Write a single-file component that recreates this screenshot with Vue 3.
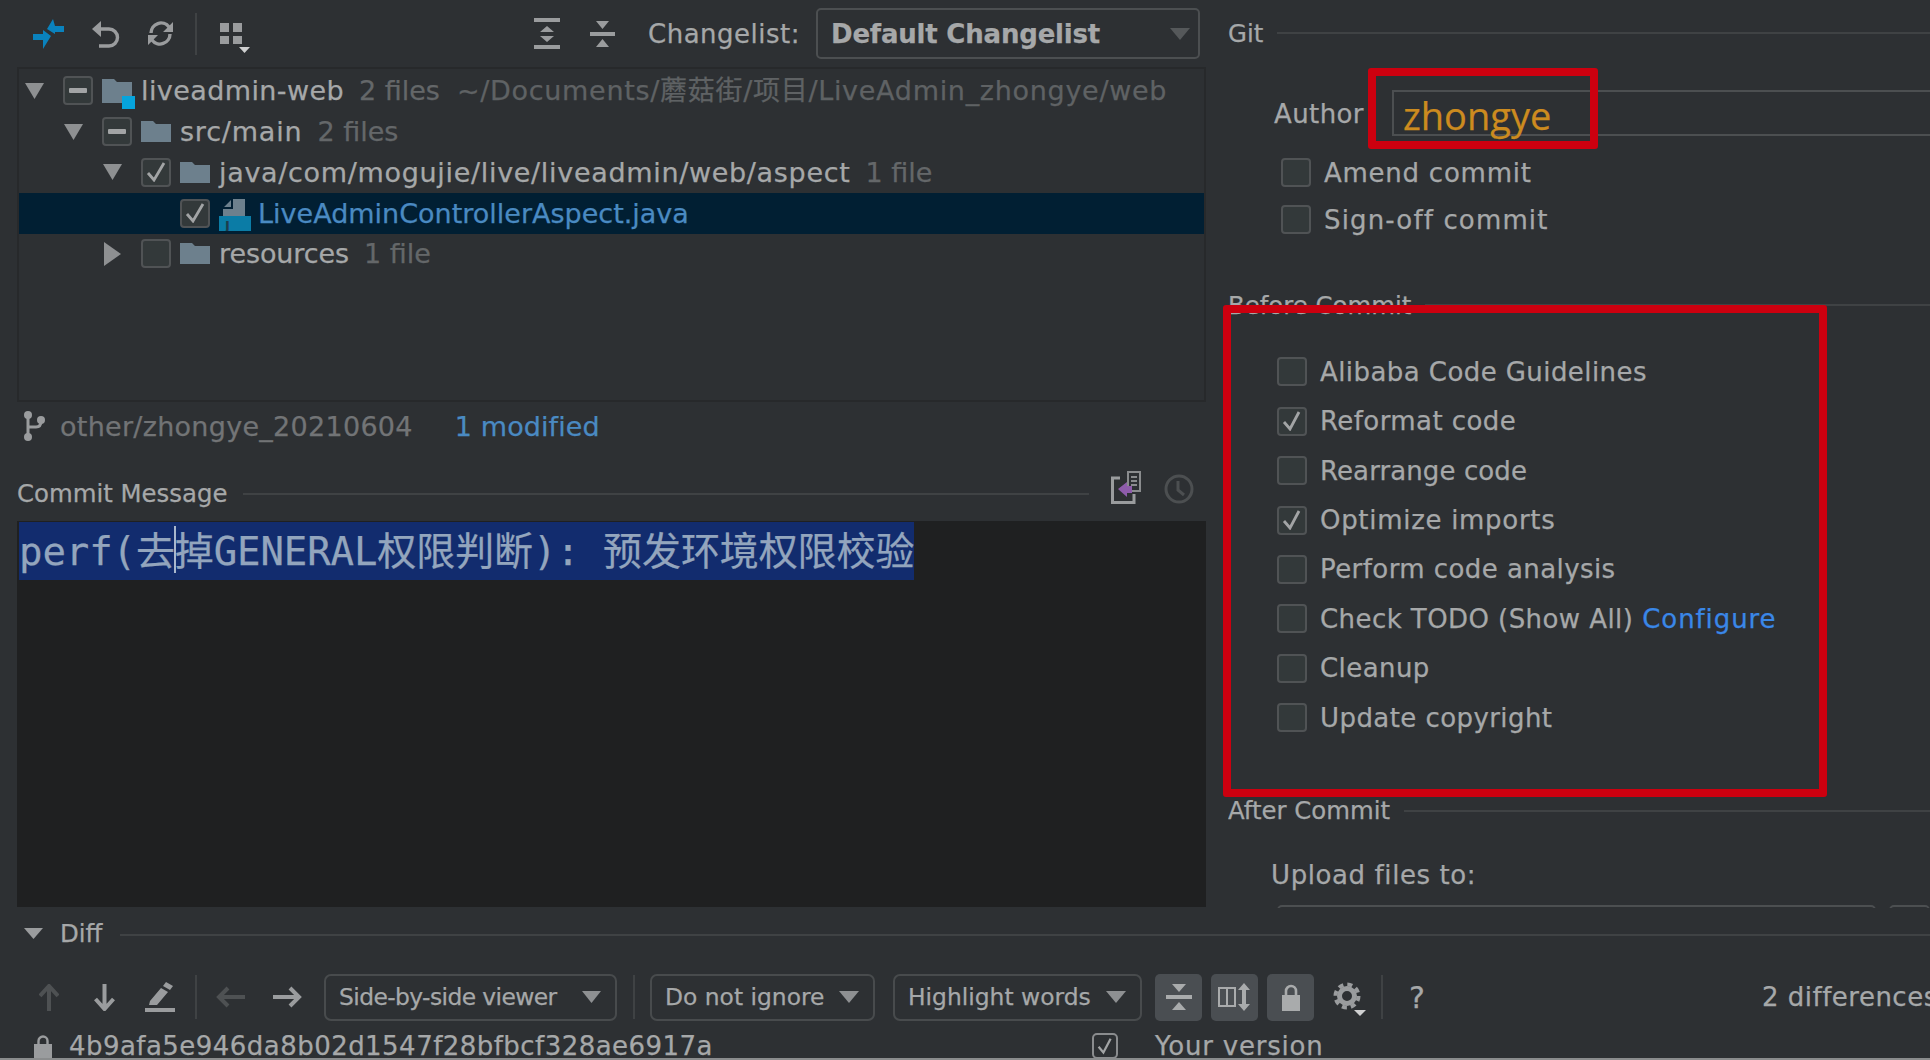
<script setup>
const rows = [
  { level: 0, arrow: 'down', box: 'mixed', icon: 'module', name: 'liveadmin-web', hint: '2 files', path: '~/Documents/蘑菇街/项目/LiveAdmin_zhongye/web', ls: 0.4 },
  { level: 1, arrow: 'down', box: 'mixed', icon: 'folder', name: 'src/main', hint: '2 files', ls: 0.8 },
  { level: 2, arrow: 'down', box: 'checked', icon: 'folder', name: 'java/com/mogujie/live/liveadmin/web/aspect', hint: '1 file', ls: 0.68 },
  { level: 3, arrow: '', box: 'checked', icon: 'java', name: 'LiveAdminControllerAspect.java', hint: '', selected: true, ls: 0 },
  { level: 2, arrow: 'right', box: 'empty', icon: 'folder', name: 'resources', hint: '1 file', ls: -0.1 },
]
const before = [
  { label: 'Alibaba Code Guidelines', on: false },
  { label: 'Reformat code', on: true },
  { label: 'Rearrange code', on: false, ls: 0.1 },
  { label: 'Optimize imports', on: true, ls: 0.7 },
  { label: 'Perform code analysis', on: false },
  { label: 'Check TODO (Show All)', on: false, link: 'Configure' },
  { label: 'Cleanup', on: false },
  { label: 'Update copyright', on: false },
]
</script>

<template>
  <div class="app">
    <div class="top">
      <div class="left">
        <div class="toolbar">
          <svg class="i-merge" width="31" height="30" viewBox="0 0 31 30"><path fill="#0a82bd" d="M20 0 L14 10 L22 15 V13 H31 V7 H22 Z M0 15 H10 V11 L18 17 L10 30 V21 H0 Z"/></svg>
          <svg class="i-undo" width="28" height="28" viewBox="0 0 28 28"><path d="M6 9 H17 a8.5 8.5 0 0 1 0 17 H7" fill="none" stroke="#9a9c9e" stroke-width="3.4"/><path d="M0 9 L9 1 V17 Z" fill="#9a9c9e"/></svg>
          <svg class="i-refresh" width="27" height="27" viewBox="0 0 27 27"><path d="M4 13 a10 10 0 0 1 18 -6 M23 14 a10 10 0 0 1 -18 6" fill="none" stroke="#9a9c9e" stroke-width="3.4"/><path d="M26 2 V12 H16 Z M1 25 V15 H11 Z" fill="#9a9c9e"/></svg>
          <span class="vsep top-sep"></span>
          <svg class="i-group" width="30" height="30" viewBox="0 0 30 30"><path fill="#9a9c9e" d="M0 0 H9 V9 H0 Z M13 0 H22 V9 H13 Z M0 13 H9 V21 H0 Z M13 13 H22 V21 H13 Z"/><path fill="#cfd0d1" d="M19 24 H30 L24.5 30 Z"/></svg>
          <svg class="i-expand" width="26" height="31" viewBox="0 0 26 31"><path fill="#9a9c9e" d="M0 0 H26 V4 H0 Z M13 8 L20 14 H6 Z M6 18 H20 L13 24 Z M0 27 H26 V31 H0 Z"/></svg>
          <svg class="i-collapse" width="25" height="26" viewBox="0 0 25 26"><path fill="#9a9c9e" d="M6 0 H19 L12.5 8 Z M0 11 H25 V15 H0 Z M12.5 18 L19 26 H6 Z"/></svg>
          <span class="cl-label">Changelist:</span>
          <div class="cl-combo">
            <span class="cl-value">Default Changelist</span>
            <svg width="20" height="12" viewBox="0 0 20 12"><path fill="#55585a" d="M0 0 H20 L10 12 Z"/></svg>
          </div>
        </div>

        <div class="tree">
          <div v-for="row in rows" :key="row.name" class="row" :class="{ selected: row.selected }">
            <div class="row-in" :style="{ paddingLeft: row.level * 39 + 'px' }">
              <span class="arrow">
                <svg v-if="row.arrow === 'down'" width="19" height="16" viewBox="0 0 19 16"><path fill="#8e9092" d="M0 0 H19 L9.5 16 Z"/></svg>
                <svg v-else-if="row.arrow === 'right'" width="17" height="24" viewBox="0 0 17 24"><path fill="#8e9092" d="M0 0 L17 12 L0 24 Z"/></svg>
              </span>
              <span class="cb tree-cb">
                <svg v-if="row.box === 'checked'" width="20" height="20" viewBox="0 0 20 20"><path d="M2 11 L8 18 L18 1" fill="none" stroke="#a2a4a5" stroke-width="2.8"/></svg>
                <i v-else-if="row.box === 'mixed'" class="dash"></i>
              </span>
              <span class="ico">
                <svg v-if="row.icon === 'folder'" width="30" height="21" viewBox="0 0 30 21"><path fill="#6d808d" d="M0 0 H12 L15 3 H30 V21 H0 Z"/></svg>
                <svg v-else-if="row.icon === 'module'" class="module" width="33" height="30" viewBox="0 0 33 30"><path fill="#6d808d" d="M0 0 H12 L15 3 H30 V21 H20 V24 H0 Z"/><rect x="20" y="17" width="13" height="13" fill="#06a4dc"/></svg>
                <svg v-else class="java" width="33" height="32" viewBox="0 0 33 32"><path fill="#6d808d" d="M14 0 H26 V17 H4 V10 H14 Z M5 8 L12 1 V8 Z"/><rect x="0" y="17" width="32" height="15" fill="#0b7ca6"/><text x="6" y="31" class="jtext">J</text></svg>
              </span>
              <span class="row-text">
                <span class="name" :style="{ letterSpacing: row.ls + 'px' }">{{ row.name }}</span>
                <span v-if="row.hint" class="hint">{{ row.hint }}</span>
                <span v-if="row.path" class="path">{{ row.path }}</span>
              </span>
            </div>
          </div>
        </div>

        <div class="status">
          <svg width="23" height="30" viewBox="0 0 23 30"><g fill="none" stroke="#9a9c9e" stroke-width="3"><path d="M6 4 V26 M6 16 H14 Q19 16 19 10"/></g><g fill="#9a9c9e"><circle cx="6" cy="4" r="4"/><circle cx="6" cy="26" r="4"/><circle cx="19" cy="9" r="4"/></g></svg>
          <span class="branch">other/zhongye_20210604</span>
          <span class="modified">1 modified</span>
        </div>

        <div class="msg-head">
          <span class="label msg-label">Commit Message</span>
          <span class="line msg-line"></span>
          <svg class="i-doc" width="30" height="33" viewBox="0 0 30 33"><path d="M9 7 H1.5 V31.5 H23 V23" fill="none" stroke="#9a9c9e" stroke-width="3"/><path d="M17 1 H29 V20 H17 Z" fill="none" stroke="#8a8c8e" stroke-width="2"/><path d="M20 6 H26 M20 10 H26 M20 14 H26" stroke="#8a8c8e" stroke-width="2"/><path d="M7 18 L16 11 V15 H21 V22 H16 V26 Z" fill="#8e5cab"/></svg>
          <svg class="i-clock" width="30" height="30" viewBox="0 0 30 30"><circle cx="15" cy="15" r="13" fill="none" stroke="#4c4f51" stroke-width="3"/><path d="M14 7 V16 L20 21" fill="none" stroke="#4c4f51" stroke-width="3"/></svg>
        </div>

        <div class="editor">
          <div class="sel">perf(去<span class="caret"></span>掉GENERAL权限判断): 预发环境权限校验</div>
        </div>
      </div>

      <div class="right">
        <div class="sec"><span class="label">Git</span><span class="line"></span></div>
        <div class="author">
          <span class="author-label">Author</span>
          <div class="author-input">zhongye</div>
        </div>
        <div class="git-opts">
          <div class="opt"><span class="cb"></span><span>Amend commit</span></div>
          <div class="opt"><span class="cb"></span><span class="signoff">Sign-off commit</span></div>
        </div>
        <div class="sec before-sec"><span class="label">Before Commit</span><span class="line"></span></div>
        <div class="before">
          <div v-for="b in before" :key="b.label" class="before-row">
            <span class="cb">
              <svg v-if="b.on" width="20" height="20" viewBox="0 0 20 20"><path d="M2 11 L8 18 L17 1" fill="none" stroke="#a2a4a5" stroke-width="2.8"/></svg>
            </span>
            <span :style="b.ls ? { letterSpacing: b.ls + 'px' } : null">{{ b.label }}</span>
            <span v-if="b.link" class="link">{{ b.link }}</span>
          </div>
        </div>
        <div class="sec after-sec"><span class="label">After Commit</span><span class="line"></span></div>
        <div class="upload">Upload files to:</div>
        <div class="upload-row"><span class="upload-field"></span><span class="upload-btn"></span></div>
      </div>
    </div>

    <div class="diff-head">
      <svg class="diff-arrow" width="19" height="11" viewBox="0 0 19 11"><path fill="#9a9c9e" d="M0 0 H19 L9.5 11 Z"/></svg>
      <span class="label diff-label">Diff</span>
      <span class="line"></span>
    </div>

    <div class="diff-bar">
      <svg class="d-up" width="20" height="27" viewBox="0 0 20 27"><path d="M10 27 V3 M1 12 L10 2 L19 12" fill="none" stroke="#4e5153" stroke-width="4"/></svg>
      <svg class="d-down" width="21" height="27" viewBox="0 0 21 27"><path d="M10.5 0 V24 M1.5 15 L10.5 25 L19.5 15" fill="none" stroke="#9a9c9e" stroke-width="4"/></svg>
      <svg class="d-edit" width="30" height="30" viewBox="0 0 30 30"><path fill="#9a9c9e" d="M21 0 L28 4 L25 8 L18 4 Z M16 6 L23 10 L12 23 L4 23 L5 19 Z M0 26 H30 V30 H0 Z"/></svg>
      <span class="vsep d-sep"></span>
      <svg class="d-left" width="29" height="22" viewBox="0 0 29 22"><path d="M29 11 H3 M12 2 L3 11 L12 20" fill="none" stroke="#4e5153" stroke-width="4"/></svg>
      <svg class="d-right" width="29" height="22" viewBox="0 0 29 22"><path d="M0 11 H26 M17 2 L26 11 L17 20" fill="none" stroke="#9a9c9e" stroke-width="4"/></svg>
      <div class="combo c1"><span>Side-by-side viewer</span><svg width="19" height="12" viewBox="0 0 19 12"><path fill="#8e9092" d="M0 0 H19 L9.5 12 Z"/></svg></div>
      <span class="vsep c-sep"></span>
      <div class="combo c2"><span>Do not ignore</span><svg width="20" height="12" viewBox="0 0 20 12"><path fill="#8e9092" d="M0 0 H20 L10 12 Z"/></svg></div>
      <div class="combo c3"><span>Highlight words</span><svg width="20" height="12" viewBox="0 0 20 12"><path fill="#8e9092" d="M0 0 H20 L10 12 Z"/></svg></div>
      <div class="tgl t1"><svg width="26" height="26" viewBox="0 0 26 26"><path fill="#a9abac" d="M6 0 H20 L13 8 Z M0 11 H26 V15 H0 Z M13 18 L20 26 H6 Z"/></svg></div>
      <div class="tgl"><svg width="34" height="28" viewBox="0 0 34 28"><path d="M1 5 H17 V23 H1 Z M9 5 V23" fill="none" stroke="#a9abac" stroke-width="2"/><path fill="#a9abac" d="M26 0 L32 7 H28 V21 H32 L26 28 L20 21 H24 V7 H20 Z"/></svg></div>
      <div class="tgl"><svg width="20" height="27" viewBox="0 0 20 27"><path d="M5 11 V7 a5 5 0 0 1 10 0 V11" fill="none" stroke="#a9abac" stroke-width="2.6"/><rect x="1" y="11" width="18" height="16" fill="#a9abac"/></svg></div>
      <svg class="d-gear" width="33" height="34" viewBox="0 0 33 34"><circle cx="14" cy="14" r="7.5" fill="none" stroke="#9a9c9e" stroke-width="5"/><circle cx="14" cy="14" r="11.5" fill="none" stroke="#9a9c9e" stroke-width="4" stroke-dasharray="5 4.03"/><path fill="#cfd0d1" d="M21 28 H33 L27 34 Z"/></svg>
      <span class="vsep g-sep"></span>
      <span class="help">?</span>
      <span class="diffs">2 differences</span>
    </div>

    <div class="foot">
      <svg width="18" height="23" viewBox="0 0 18 23"><path d="M4.5 10 V6 a4.5 4.5 0 0 1 9 0 V10" fill="none" stroke="#9a9c9e" stroke-width="2.4"/><rect x="0" y="9" width="18" height="14" fill="#9a9c9e"/></svg>
      <span class="hash">4b9afa5e946da8b02d1547f28bfbcf328ae6917a</span>
      <span class="foot-cb"><svg width="16" height="18" viewBox="0 0 20 20"><path d="M2 11 L8 18 L17 1" fill="none" stroke="#a2a4a5" stroke-width="2.8"/></svg></span>
      <span class="version">Your version</span>
    </div>

    <div class="mark mark-author"></div>
    <div class="mark mark-before"></div>
  </div>
</template>

<style>
html, body { margin: 0; background: #2d3033; }
</style>

<style scoped>
.app {
  position: relative;
  width: 1930px;
  height: 1060px;
  overflow: hidden;
  display: flex;
  flex-direction: column;
  box-sizing: border-box;
  border-bottom: 2px solid #8a8c8d;
  background: #2d3033;
  color: #a6a8a9;
  font-family: "DejaVu Sans", "Noto Sans CJK SC", sans-serif;
  font-size: 26px;
  white-space: nowrap;
  -webkit-text-stroke: 0.25px currentColor;
}
svg { display: block; flex: none; }
.top { display: flex; height: 908px; flex: none; }
.left { width: 1228px; flex: none; display: flex; flex-direction: column; box-sizing: border-box; padding: 0 22px 1px 17px; }
.toolbar { height: 67px; flex: none; display: flex; align-items: center; position: relative; }
.i-merge { margin-left: 16px; }
.i-undo { margin-left: 28px; }
.i-refresh { margin-left: 27px; }
.vsep { width: 2px; background: #3f4244; flex: none; }
.top-sep { height: 42px; margin-left: 21px; }
.i-group { margin-left: 23px; margin-top: 8px; }
.i-expand { margin-left: 284px; }
.i-collapse { margin-left: 30px; }
.cl-label { margin-left: 33px; width: 168px; letter-spacing: 0.5px; }
.cl-combo {
  width: 384px; height: 51px; box-sizing: border-box; flex: none;
  border: 2px solid #4c4f51; border-radius: 5px;
  display: flex; align-items: center; justify-content: space-between;
  padding: 0 8px 0 13px; font-weight: 700; letter-spacing: -0.2px;
}
.tree { height: 335px; flex: none; box-sizing: border-box; border: 2px solid #27292b; padding-top: 1.5px; }
.row { height: 40.75px; display: flex; align-items: center; }
.row.selected { background: #011f33; }
.row-in { display: flex; align-items: center; margin-left: 6px; }
.arrow { width: 19px; flex: none; display: flex; justify-content: center; }
.cb {
  width: 30px; height: 29px; box-sizing: border-box; flex: none;
  border: 2px solid #505355; border-radius: 4px; background: #33393a;
  display: flex; align-items: center; justify-content: center;
}
.tree-cb { margin-left: 19px; }
.dash { display: block; width: 18px; height: 5px; background: #a2a4a5; border-radius: 1px; }
.ico { width: 39px; margin-left: 9px; flex: none; display: flex; align-items: center; height: 30px; }
.module { margin-top: 6px; }
.java { margin-top: 4px; }
.jtext { font: 700 13px "DejaVu Sans", sans-serif; fill: #1d3d4e; -webkit-text-stroke: 0; }
.row-text { font-size: 27px; margin-top: 1px; line-height: 34px; }
.selected .name { color: #4a8ac2; }
.hint { margin-left: 15px; color: #646769; }
.path { margin-left: 17px; color: #5f6264; letter-spacing: 0.7px; }
.status { height: 46px; flex: none; display: flex; align-items: center; padding-left: 5px; margin-top: 1px; font-size: 27px; }
.branch { margin-left: 15px; color: #727476; letter-spacing: 0.28px; }
.modified { margin-left: 42px; color: #4a8ac2; letter-spacing: 0.1px; }
.msg-head { height: 72px; flex: none; display: flex; align-items: center; position: relative; }
.label { flex: none; font-size: 24.4px; }
.msg-label { margin-top: 16px; }
.line { flex: 1; height: 2px; background: #3f4244; }
.msg-line { margin-left: 16px; margin-top: 18px; }
.i-doc { margin-left: 22px; margin-top: 5px; }
.i-clock { margin-left: 23px; margin-right: 12px; margin-top: 8px; }
.editor { flex: 1; background: #1f2021; padding: 1px 0 0 2px; min-height: 0; }
.sel {
  display: inline-block; height: 58px; line-height: 60px;
  background: #122c6e; color: #93a5bd;
  font-family: "DejaVu Sans Mono", "Noto Sans CJK SC", monospace; font-size: 39px;
  letter-spacing: -0.1px;
}
.caret { position: relative; display: inline-block; width: 0; height: 0; }
.caret::after { content: ""; position: absolute; left: -1px; top: -39px; width: 2px; height: 47px; background: #a9b7cc; }
.right { flex: 1; min-width: 0; overflow: hidden; height: 908px; }
.sec { height: 40px; display: flex; align-items: center; }
.sec:first-child { margin-top: 13px; }
.sec .line { margin-left: 14px; }
.author { display: flex; align-items: center; margin-top: 37px; height: 46px; padding-left: 46px; }
.author-label { width: 118px; flex: none; letter-spacing: 0.4px; margin-top: 2px; }
.author-input {
  flex: 1; height: 46px; box-sizing: border-box;
  border: 2px solid #4c4f51; border-right: 0;
  padding-left: 9px; color: #cc8b1f; font-size: 38px; line-height: 46px;
  font-family: "Open Sans", sans-serif;
}
.git-opts { margin-top: 13px; padding-left: 53px; }
.opt { height: 47px; display: flex; align-items: center; gap: 13px; letter-spacing: 0.75px; }
.signoff { letter-spacing: 1.15px; }
.before-sec { margin-top: 42px; }
.before { margin-top: 22px; padding-left: 49px; }
.before-row { height: 49.45px; display: flex; align-items: center; letter-spacing: 0.43px; }
.before-row .cb { margin-right: 13px; }
.link { margin-left: 9px; color: #3a87e8; letter-spacing: 0.9px; }
.after-sec { margin-top: 48px; }
.upload { margin-top: 24px; height: 40px; line-height: 40px; padding-left: 43px; letter-spacing: 0.6px; }
.upload-row { margin-top: 10px; display: flex; padding-left: 49px; gap: 13px; }
.upload-field { width: 599px; height: 30px; box-sizing: border-box; border: 2px solid #4c4f51; border-radius: 5px; flex: none; }
.upload-btn { flex: 1; height: 30px; box-sizing: border-box; border: 2px solid #4c4f51; border-radius: 5px; }
.diff-head { height: 54px; flex: none; display: flex; align-items: center; padding-left: 24px; }
.diff-arrow { margin-top: -4px; }
.diff-label { margin-left: 17px; margin-top: -3px; }
.diff-head .line { margin-left: 18px; }
.diff-bar { height: 48px; flex: none; display: flex; align-items: center; margin-top: 11px; position: relative; }
.d-up { margin-left: 39px; }
.d-down { margin-left: 35px; }
.d-edit { margin-left: 30px; }
.d-sep { height: 44px; margin-left: 20px; }
.d-left { margin-left: 19px; }
.d-right { margin-left: 28px; }
.combo {
  height: 47px; box-sizing: border-box; flex: none;
  border: 2px solid #484b4d; border-radius: 7px;
  display: flex; align-items: center; justify-content: space-between;
  padding: 0 14px 0 13px; font-size: 23.4px;
}
.c1 { width: 293px; margin-left: 22px; letter-spacing: -0.6px; }
.c-sep { height: 44px; margin-left: 16px; }
.c2 { width: 225px; margin-left: 15px; }
.c3 { width: 249px; margin-left: 18px; }
.tgl {
  width: 47px; height: 47px; flex: none; margin-left: 9px;
  background: #4a4e52; border-radius: 5px;
  display: flex; align-items: center; justify-content: center;
}
.t1 { margin-left: 13px; }
.d-gear { margin-left: 19px; margin-top: 4px; }
.g-sep { height: 44px; margin-left: 15px; }
.help { margin-left: 26px; font-size: 30px; }
.diffs { margin-left: 337px; letter-spacing: 0.5px; }
.foot { height: 36px; flex: none; display: flex; align-items: center; padding-left: 34px; margin-top: 7px; }
.hash { margin-left: 17px; width: 1023px; flex: none; letter-spacing: 0.46px; }
.foot-cb {
  width: 26px; height: 26px; box-sizing: border-box; flex: none;
  border: 2px solid #8a8c8e; border-radius: 5px;
  display: flex; align-items: center; justify-content: center;
}
.version { margin-left: 37px; letter-spacing: 0.8px; }
.mark { position: absolute; box-sizing: border-box; border: 8px solid #cc000f; border-radius: 3px; }
.mark-author { left: 1368px; top: 68px; width: 230px; height: 81px; }
.mark-before { left: 1223px; top: 305px; width: 604px; height: 492px; }
</style>
